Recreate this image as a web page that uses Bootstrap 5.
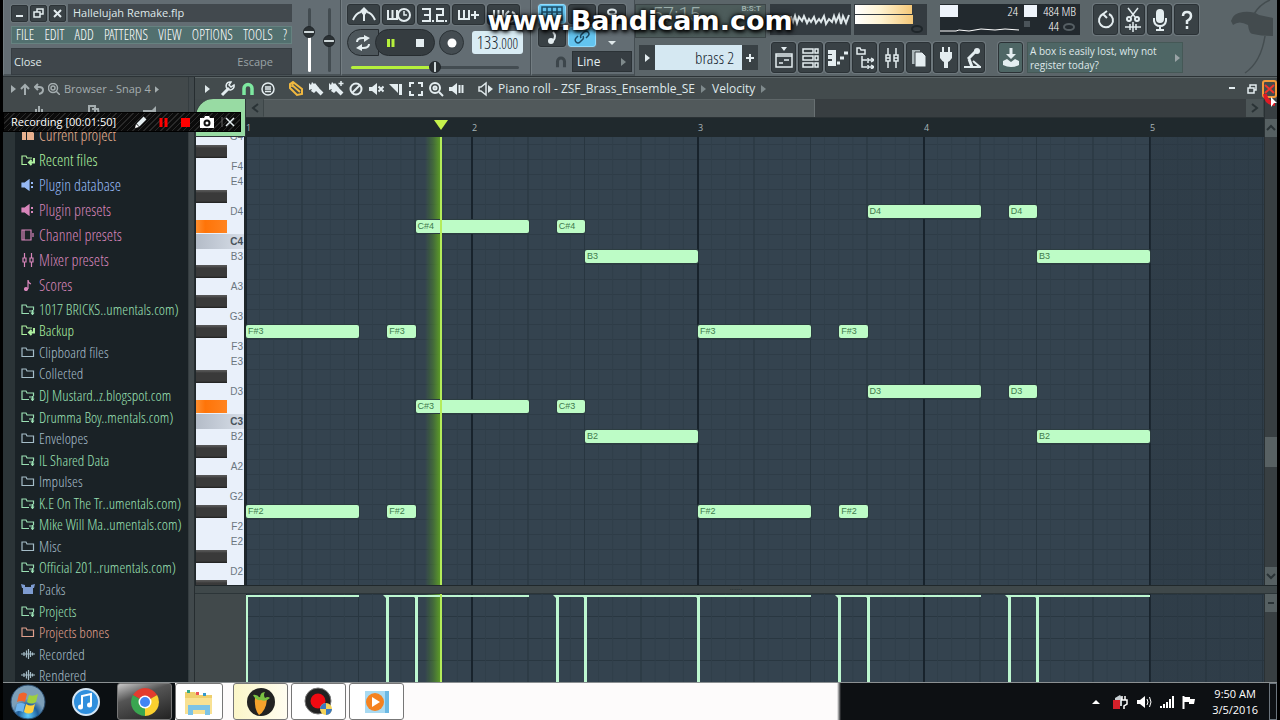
<!DOCTYPE html>
<html lang="en">
<head>
<meta charset="utf-8">
<meta name="viewport" content="width=device-width, initial-scale=1">
<title>Hallelujah Remake.flp</title>
<link href="https://cdn.jsdelivr.net/npm/bootstrap@5.3.0/dist/css/bootstrap.min.css" rel="stylesheet">
<style>
:root{--bar:226px;--row:15px;--ui:"Open Sans","Noto Sans",sans-serif;--narrow:"Open Sans Condensed Light","Open Sans Condensed","Liberation Sans Narrow","Open Sans",sans-serif}
body{background:#000;font-family:var(--ui);font-size:11px;line-height:16px;color:#dfe8ea}
svg{display:block;fill:none;stroke:currentColor;stroke-width:2;flex:none}
button,input,select{font:inherit;color:inherit}
.btn{--bs-btn-font-size:11px;--bs-btn-line-height:1;--bs-btn-color:#e4edf0;--bs-btn-padding-x:0;--bs-btn-padding-y:0;--bs-btn-border-radius:0}
.thin{stroke-width:1.5}
.shell{height:100vh;padding:0 3px}
/* top panel */
.topbar{height:77px;background:#5b6569;border-bottom:1px solid #2c3336;font-size:11px}
.pane{background:#636d73;border-right:1px solid #444d52;border-left:1px solid #737d82;border-bottom:2px solid #4a5357}
.keybtn{background:#394145;border:1px solid #2b3236;border-radius:3px!important;display:grid;place-items:center;box-shadow:0 0 0 1px #6d777c}
.keybtn:hover{background:#465056}
.keybtn.lit{background:#63c4ef;color:#1d4b66;border-color:#8fdcff}
.p-main{width:338px}
.titlebox{width:281px;margin-left:7px;gap:4px}
.winbtn{width:17px;height:17px;border-radius:2px!important}
.fname{height:18px;background:#42494e;line-height:17px;padding-left:5px}
.menubar{height:18px;background:#52706f;font-family:var(--narrow);font-weight:300;font-size:14px;line-height:16px;color:#fff;padding:0 4px;border:1px solid #668280}
.menubar a{color:inherit;text-decoration:none}
.hintbox{height:27px;background:#3f464b;border:1px solid #363d42;padding:0 2px;line-height:25px}
.dim{color:#9aa3a6}
.faders{margin-left:9px}
.vslot{width:16px;height:64px;display:grid;place-content:center}
.rng{appearance:none;background:transparent;height:14px;margin:0}
.rng::-webkit-slider-runnable-track{height:3px;border-radius:2px;background:linear-gradient(90deg,var(--on,#fff) var(--v),#434c51 var(--v))}
.rng::-webkit-slider-thumb{appearance:none;width:12px;height:12px;margin-top:-5px;border-radius:50%;background:linear-gradient(90deg,#2b3134 42%,#cfd8da 42% 58%,#2b3134 58%);border:1px solid #20262a}
.rng.up{width:64px;transform:rotate(-90deg)}
.rng.song{--on:#b6f03c;width:168px}
.p-trans{width:190px;padding-left:5px}
.p-trans .keybtn{width:33px;height:21px}
.pill{height:27px;background:#353c40;border:1px solid #262c30}
.pill.soft{width:32px;background:#4d565b;border-radius:14px 0 0 14px!important;display:grid;place-items:center}
.pill.duo{width:60px;border-radius:14px;margin-left:-4px}
.pill.duo .btn{width:29px;display:grid;place-items:center;height:25px}
.recbtn{width:25px;height:25px;border-radius:50%!important;background:#444c51;border:1px solid #2b3236;display:grid;place-items:center}
.tempo{width:51px;height:23px;background:#d9ecf4;color:#14242e;border-radius:3px;font-size:18px;font-family:var(--narrow);font-weight:300;line-height:22px}
.tempo small{font-size:14px}
.p-snap{width:104px;padding-left:6px}
.p-snap .keybtn{width:28px;height:20px}
.snapkeys{gap:3px 2px}
.linesel{width:60px;height:21px;background:#363d42;border:1px solid #2b3236;color:#e4edf0;font-size:12px;padding:0 4px;appearance:none}
.lit-gap{gap:2px}
.r-top{height:39px}
.lcd{width:131px;background:#4d5c5b;border:1px solid #3d4648;height:34px;color:#9db0ad;font-family:Roboto,sans-serif;font-weight:300;font-size:20px;line-height:20px}
.lcd small{font-size:8px;line-height:8px;font-weight:700}
.scope{width:81px;height:31px;background:#333b40}
.meter{width:73px;height:31px;background:#343b40;margin-left:3px}
.meter i{display:block;height:9px;margin:1px;background:linear-gradient(90deg,#fff,#fff3d0 45%,#f5c878)}
.cpu{width:140px;height:31px;background:#22292e;font-family:var(--narrow);font-weight:300;font-size:13px;line-height:15px;color:#fff;margin-left:13px}
.cpu-val{position:absolute;right:2px;top:0}
.after-cpu{margin-left:13px}
.tool{width:25px;height:31px}
.patname{width:87px;height:25px;background:#d5e8f2;color:#14242e;border:0;text-align:right;padding:0 8px;font-family:var(--narrow);font-weight:300;font-size:17px}
.patbtn{width:16px;height:25px;background:#394145;display:grid;place-items:center}
.tools{margin-left:13px}
.news{width:156px;height:31px;background:#4e6665;border:1px solid #455856;line-height:14px;padding:0 2px;font-size:10px}
.teal{background:#4e6665}
.mark-over{position:absolute;left:50%;top:6px;transform:translateX(-50%);font:bold 27px/30px "DejaVu Sans",sans-serif;color:#fff;text-shadow:0 0 3px #000,1px 2px 4px #000,0 0 6px #000;white-space:nowrap;z-index:5}
/* browser */
.side{width:185px;background:#2b3437}
.side-head{height:45px;background:#42494b;color:#a4adaf}
.side-nav{gap:4px}
.side-body{background:#1a2226;margin-left:12px}
.side-body a{display:flex;align-items:center;gap:4px;padding-left:6px;text-decoration:none;font-family:var(--narrow);font-weight:300;font-size:15px;line-height:20px;white-space:nowrap}
.side-body .grp1 a{font-size:16px}
.side-body svg{stroke-width:1.2}
.grp1{display:grid;grid-template-rows:repeat(7,1fr);height:176px}
.grp2{display:grid;grid-template-rows:repeat(18,1fr);height:388px}
.c-or{color:#e8b08e}.c-gr{color:#aef0a0}.c-bl{color:#96b9f5}.c-pk{color:#d886bb}.c-te{color:#9be0b4}.c-gy{color:#a5bdc8}.c-rd{color:#e0a08c}
.gutter{width:7px;background:#41494c;border-right:1px solid #262d30;border-left:1px solid #353d40}
.rec{position:absolute;left:3px;top:112px;width:238px;height:20px;background:repeating-linear-gradient(135deg,#0b0b0b 0 3px,#292929 3px 4px);border:1px solid #000;color:#fff;z-index:6;padding-left:7px}
.rec .btn{width:22px;display:grid;place-items:center}
/* piano roll */
.roll{background:#41494b;min-width:0}
.roll-head{height:22px;background:#434b4d;border-top:1px solid #5c6567;padding-left:10px}
.roll-head .btn{width:20px;display:grid;place-items:center;height:21px}
.speaker{margin:0 4px 0 12px}
.crumb{font-size:12px}
.sep{width:5px;height:8px;margin:0 6px;color:#7f8a8c}
.roll-head .shut{border:2px solid #f29a3a;height:18px;width:15px;border-radius:3px}
.corner{width:51px;background:#98dba3;border-top-left-radius:18px;border:1px solid #2d3639;border-width:0 1px 1px 1px}
.hscroll{height:19px;background:#383e41;border-bottom:1px solid #2a3134}
.hscroll .btn{width:18px;background:#4c5557;display:grid;place-items:center;border-right:1px solid #3d4648}
.hscroll path,.vbar path{stroke:#2a3336}
.hthumb{width:551px;background:#51595b;border-right:1px solid #687072;border-top:1px solid #5e6668}
.ruler{height:19px;background:#20292d;color:#a8b4b8;font-size:9px;line-height:18px}
.ruler span{position:absolute;top:1px}
.playtip{position:absolute;top:2px;margin-left:-7px;border:7px solid transparent;border-top:10px solid #c6f24c;border-bottom:0}
.keys{width:51px;background:#e9f0fa;border-left:1px solid #20272a;border-right:2px solid #20272a;overflow:hidden;color:#6b7680;font:10px/15px "Liberation Sans",Arial,sans-serif}
.keys ol{margin:-8px 0 0;padding:0;list-style:none}
.keys li{height:var(--row);padding-right:1px;text-align:right}
.keys li.blk{background:linear-gradient(180deg,#555 0 1px,#3a3a3a 3px 11px,#1e1e1e 13px) left 1px/31px 13px no-repeat}
.keys li.on{background:linear-gradient(90deg,#ff8f30,#ff7408 30%,#ff8420) left 1px/31px 13px no-repeat}
.keys li.oct{background:linear-gradient(90deg,#b4bcc8,#d6dde7);color:#48525a;font-weight:bold}
.grid-bg{--beat:calc(var(--bar) / 4);--six:calc(var(--bar) / 16);background-color:#34434f}
.notes{background-image:
 linear-gradient(90deg,transparent calc(var(--bar)*4),#26323c55 0),
 linear-gradient(90deg,#18232c 2px,transparent 2px),linear-gradient(90deg,#283640 1px,transparent 1px),linear-gradient(90deg,#2f3e49 1px,transparent 1px),linear-gradient(#2e3c47 1px,transparent 1px);
 background-size:100% 100%,var(--bar) 100%,var(--beat) 100%,var(--six) 100%,100% var(--row);background-position:0 0,-1px 0,-1px 0,-1px 0,0 7px;overflow:hidden}
.vel{height:88px;background-image:
 linear-gradient(90deg,transparent calc(var(--bar)*4),#26323c55 0),
 linear-gradient(90deg,#18232c 2px,transparent 2px),linear-gradient(90deg,#283640 1px,transparent 1px),linear-gradient(90deg,#2f3e49 1px,transparent 1px),linear-gradient(#293741 1px,transparent 1px);
 background-size:100% 100%,var(--bar) 100%,var(--beat) 100%,var(--six) 100%,100% 22px;background-position:0 0,-1px 0,-1px 0,-1px 0,0 0;overflow:hidden}
.vel-pad{width:51px}
.note{position:absolute;height:13px;background:#bdfcc6;color:#3f7a4c;border-radius:2px;font:9px/13px "Liberation Sans",Arial,sans-serif;padding-left:2px;box-shadow:0 0 0 1px #2c3c40}
.stem{position:absolute;top:1px;height:100%;border-top:2px solid #bdf7d0}
.stem::before{content:"";position:absolute;left:-1px;top:0;width:3px;height:100vh;background:#bdf7d0}
.stem::after{content:"";position:absolute;left:-4px;top:-2px;border:4px solid transparent;border-top-color:#bdf7d0;border-bottom:0}
.playglow{position:absolute;top:0;bottom:0;width:16px;margin-left:-16px;background:linear-gradient(90deg,transparent,#4f8a2a88 50%,#5f9f25)}
.playline{position:absolute;top:0;bottom:0;width:2px;margin-left:-1px;background:#b4ec5a;z-index:2}
.vbar{width:13px;background:#383f42;border-left:1px solid #2a3134}
.vbar .btn{height:18px;background:#566062;display:grid;place-items:center}
.vthumb{height:30px;background:#586163;margin:auto 0 100px}
.divider{height:9px;background:#3f484a;border-top:1px solid #20282b;border-bottom:1px solid #2c3538;color:#20282b;line-height:5px;font-size:8px}
/* taskbar */
.task{height:38px;background:linear-gradient(90deg,#0b0f12 0 172px,#fdfbfb 172px 834px,#0d1013 838px);border-top:1px solid #8b9092;color:#fff}
.task .btn{height:37px;display:grid;place-items:center}
.start{width:42px}
.itunes{width:34px;margin-left:20px}
.task .app{width:55px;border:1px solid #777;border-radius:3px;background:#fff;margin-left:3px}
.task .app.dark{background:linear-gradient(160deg,#c9c9c9,#555 35%,#222);margin-left:14px}
.task .app.slim{width:48px}
.task .app.gold{background:linear-gradient(90deg,#fbf6c8,#fffdf0);margin-left:10px}
.clock{font-size:11px;line-height:16px;text-align:center}
.tray{padding-right:11px}
.desk{width:8px}
.cursor{top:92px;margin-right:3px;z-index:6}
.logo{margin-right:3px}
</style>
</head>
<body>
<svg width="0" height="0" class="position-absolute" aria-hidden="true"><defs>
<symbol id="fold" viewBox="0 0 14 12"><path d="M1 10.500V2h4l1 2h6.500v6.500z"/></symbol>
<symbol id="foldp" viewBox="0 0 14 12"><path d="M8 10.500H1V2h4l1 2h6.500v3M8 8h5M11.500 7v3.500M10 9.500l1.500 2L13 9.500"/></symbol>
<symbol id="foldr" viewBox="0 0 14 12"><path d="M6 10.500H1V2h4l1 2h5"/><path d="M13 4v4.500H8.500M10.500 6L8 8.500l2.500 2.500" stroke-width="2"/></symbol>
<symbol id="plug" viewBox="0 0 14 12"><path d="M1 4h3l4-3v10L4 8H1z" fill="currentColor"/><path d="M11 3v2M11 7v2" stroke-width="2"/></symbol>
<symbol id="wave" viewBox="0 0 14 12"><path d="M0 6h14M3 4v4M5.500 2.500v7M7.500 1v10M9.500 3v6M11.500 4.500v3"/></symbol>
<symbol id="spk" viewBox="0 0 16 16"><path d="M1 6h3l5-4v12l-5-4H1z" fill="currentColor" stroke="none"/></symbol>
<symbol id="tri" viewBox="0 0 5 8"><path d="M0 0l5 4-5 4z" fill="currentColor" stroke="none"/></symbol>
</defs></svg>

<div class="shell d-flex flex-column position-relative overflow-hidden">
<header class="topbar d-flex flex-shrink-0">
  <section class="pane p-main d-flex flex-shrink-0">
    <div class="titlebox pt-1 d-flex flex-column">
      <div class="d-flex lit-gap align-items-center">
        <button class="btn keybtn winbtn" aria-label="Minimize"><svg width="11" height="11"><path d="M2 8h7"/></svg></button>
        <button class="btn keybtn winbtn" aria-label="Restore"><svg class="thin" width="11" height="11"><path d="M1 4h6v5H1zM4 4V1h6v5H7"/></svg></button>
        <button class="btn keybtn winbtn" aria-label="Close"><svg width="11" height="11"><path d="M2 2l7 7M9 2l-7 7"/></svg></button>
        <div class="fname flex-grow-1">Hallelujah Remake.flp</div>
      </div>
      <nav class="menubar d-flex justify-content-between"><a href="#">FILE</a><a href="#">EDIT</a><a href="#">ADD</a><a href="#">PATTERNS</a><a href="#">VIEW</a><a href="#">OPTIONS</a><a href="#">TOOLS</a><a href="#">?</a></nav>
      <div class="hintbox d-flex"><span>Close</span><span class="ms-auto me-3 dim">Escape</span></div>
    </div>
    <div class="d-flex pt-2 faders gap-1">
      <div class="vslot"><input type="range" class="rng up" value="66" aria-label="Main volume" style="--v:66%"></div>
      <div class="vslot"><input type="range" class="rng up" value="48" aria-label="Main pitch" style="--v:0%"></div>
    </div>
  </section>

  <section class="pane p-trans flex-shrink-0 pt-1">
    <div class="d-flex lit-gap">
      <button class="btn keybtn" aria-label="Metronome"><svg width="26" height="16"><path d="M2 13Q5 6 10 5M16 5q5 1 8 8M13 5v9"/><path d="M13 0l4 4-4 5-4-5z" fill="currentColor" stroke="none"/></svg></button>
      <button class="btn keybtn" aria-label="Wait for input"><svg width="26" height="16"><path d="M2 3v9h9V3M6.500 3v9"/><circle cx="18" cy="8" r="6"/><path d="M18 4v4h3" stroke-width="1.500"/></svg></button>
      <button class="btn keybtn" aria-label="Countdown"><svg width="26" height="16"><path d="M1 2h8v12H1M3 8h6M12 13v2M15 2h7v6h-6v6h7M25 13v2"/></svg></button>
      <button class="btn keybtn" aria-label="Overdub"><svg width="24" height="16"><path d="M2 3v9h10V3M7 3v9M14 8h8M18 4v8"/></svg></button>
      <button class="btn keybtn" aria-label="Loop record"><svg width="24" height="16"><path d="M2 3v9h9V3M6.500 3v9M20 5a5 5 0 1 1-5 1l2-2"/></svg></button>
    </div>
    <div class="d-flex align-items-center mt-1">
      <button class="btn pill soft" aria-label="Song mode"><svg width="16" height="16"><path d="M2 7q0-4 6-4h3M14 9q0 4-6 4H5"/><path d="M9 0l6 3-6 4zM7 9l-6 4 6 3z" fill="currentColor" stroke="none"/></svg></button>
      <div class="pill duo d-flex"><button class="btn" aria-label="Pause"><svg width="10" height="10"><path d="M2.500 1v8M7 1v8" stroke="#b6f03c" stroke-width="3"/></svg></button><button class="btn" aria-label="Stop"><svg width="8" height="8"><path d="M0 0h8v8H0z" fill="currentColor" stroke="none"/></svg></button></div>
      <button class="btn recbtn ms-1" aria-label="Record"><svg width="10" height="10"><circle cx="5" cy="5" r="4.500" fill="#fff" stroke="none"/></svg></button>
      <div class="tempo ms-2 text-center">133<small>.000</small></div>
    </div>
    <input type="range" class="rng song d-block ms-1 mt-1" value="50" aria-label="Song position" style="--v:50%">
  </section>

  <section class="pane p-snap flex-shrink-0 pt-1">
    <div class="d-flex flex-wrap snapkeys">
      <button class="btn keybtn lit" aria-label="Typing keyboard"><svg class="thin" width="22" height="16"><path d="M1 1h20v13H1zM6 1v13M11 1v13M16 1v13M1 6h20"/></svg></button>
      <button class="btn keybtn" aria-label="Step edit"></button>
      <button class="btn keybtn" aria-label="Knob"><svg width="14" height="14"><ellipse cx="7" cy="5" rx="4" ry="2.500"/></svg></button>
      <button class="btn keybtn" aria-label="Note"><svg width="14" height="14"><path d="M8 2q4 4 0 9"/><circle cx="6" cy="11" r="2" fill="currentColor"/></svg></button>
      <button class="btn keybtn lit" aria-label="Link"><svg width="16" height="16"><path d="M7 9a3 3 0 0 1 0-3l3-3a2.500 2.500 0 0 1 4 4l-2 2M9 7a3 3 0 0 1 0 3l-3 3a2.500 2.500 0 0 1-4-4l2-2" stroke="#1d4b66" stroke-width="1.500"/></svg></button>
      <svg width="28" height="20"><path d="M10 14h8l-4 4z" fill="currentColor" stroke="none"/></svg>
    </div>
    <div class="d-flex align-items-center mt-1"><svg class="ms-3 me-1" width="14" height="14" viewBox="0 0 16 16"><path d="M4 14V7.500a4 4 0 0 1 8 0V14" stroke="#3d464b" stroke-width="3.500"/></svg>
      <div class="position-relative"><select class="linesel" aria-label="Snap"><option>Line</option></select><svg class="sep position-absolute end-0 top-50 translate-middle-y"><use href="#tri"/></svg></div></div>
  </section>

  <div class="flex-grow-1 d-flex flex-column">
    <div class="r-top d-flex pt-1">
      <div class="lcd ps-3 pe-1 d-flex justify-content-between">57:15<small>B:S:T</small></div>
      <svg class="scope ms-1" width="81" height="31" viewBox="0 0 81 31"><path d="M2 13l4 1 5-2 5 3 5-2 2 5 2-6 2 7 2-6 3 4 2-5 3 7 2-4 2 3 3-5 2 6 3-4 2 3 3-6 2 8 3-5 3 3 2-6 2 6 3-7 2 9 2-8 3 7 3-8" stroke-width="2"/></svg>
      <div class="meter overflow-hidden"><i style="width:57px"></i><i style="width:58px"></i><svg class="ms-auto me-1" width="12" height="8"><ellipse cx="6" cy="4" rx="5" ry="3" stroke="#1f262a"/></svg></div>
      <div class="cpu d-flex">
        <div class="position-relative"><svg width="80" height="31"><path d="M0 1h18v12H0z" fill="#eef4fb" stroke="none"/><path d="M0 27h16l3-1 10 1 12-2 14 1 10-1 14 1" stroke-width="1"/></svg><span class="cpu-val">24</span></div>
        <svg class="ms-1" width="13" height="31"><path d="M0 1h13v12H0z" fill="#eef4fb" stroke="none"/><path d="M0 17h6v6H0z" fill="#4b545a" stroke="none"/></svg>
        <div class="flex-grow-1 text-end pe-1 text-nowrap"><div>484 MB</div><div class="d-flex align-items-center justify-content-end gap-1">44<svg width="13" height="8"><ellipse cx="6" cy="4" rx="5" ry="3" stroke="#555e63"/></svg></div></div>
      </div>
      <div class="d-flex after-cpu lit-gap">
        <button class="btn keybtn tool" aria-label="Undo"><svg width="18" height="20"><path d="M6 4a7 7 0 1 0 6 0M10 1L6 4l4 4"/></svg></button>
        <button class="btn keybtn tool" aria-label="Cut"><svg width="18" height="26"><path d="M4 1l7 9M14 1L7 10M1 20h16M6 17v6M9 15v10M12 17v6" stroke-width="1.500"/><circle cx="5" cy="12" r="2"/><circle cx="13" cy="12" r="2"/></svg></button>
        <button class="btn keybtn tool" aria-label="Record audio"><svg width="16" height="22"><rect x="5" y="1" width="6" height="12" rx="3" fill="currentColor"/><path d="M2 9v3q1 5 6 5t6-5V9M8 17v4M4 21h8"/></svg></button>
        <button class="btn keybtn tool" aria-label="Help"><svg width="14" height="20"><path d="M3 6q0-4 4-4t4 4q0 3-4 5v3M7 16v3" stroke-width="2.500"/></svg></button>
      </div>
    </div>
    <div class="d-flex align-items-center flex-grow-1">
      <button class="btn patbtn ms-1" aria-label="Pattern menu"><svg width="5" height="8"><use href="#tri"/></svg></button>
      <input class="patname" value="brass 2" aria-label="Pattern name">
      <button class="btn patbtn" aria-label="Add pattern"><svg width="8" height="8"><path d="M4 0v8M0 4h8"/></svg></button>
      <div class="d-flex tools lit-gap">
        <button class="btn keybtn tool" aria-label="Playlist"><svg class="thin" width="18" height="22"><path d="M6 0h6L9 4z" fill="currentColor" stroke="none"/><path d="M1 7h16v13H1zM1 9h16M4 16h4M9 13h5"/></svg></button>
        <button class="btn keybtn tool" aria-label="Channel rack"><svg class="thin" width="18" height="20"><path d="M1 1h10v4H1zM13 1h3v4h-3zM1 8h10v4H1zM13 8h3v4h-3zM1 15h10v4H1zM13 15h3v4h-3z"/></svg></button>
        <button class="btn keybtn tool" aria-label="Piano roll"><svg width="20" height="18"><path d="M0 1h8v16H0zM0 5h4v1H0zM0 10h4v2H0z" fill="currentColor" fill-rule="evenodd" stroke="none"/><path d="M9 14h3M12 9h4M16 4h4" stroke-width="3"/></svg></button>
        <button class="btn keybtn tool" aria-label="Browser"><svg class="thin" width="18" height="22"><path d="M1 7V1h3l1 2h4v4zM6 9v11h5M6 13h5M12 11v5M12 18v4M12 13h5M12 20h5M15 11l3 2-3 2M15 18l3 2-3 2"/></svg></button>
        <button class="btn keybtn tool" aria-label="Mixer"><svg class="thin" width="16" height="20"><path d="M4 0v7M4 13v7M12 0v7M12 13v7M2 7h4v6H2zM10 7h4v6h-4zM2 10h4M10 10h4"/></svg></button>
        <button class="btn keybtn tool" aria-label="Project files"><svg width="16" height="18"><path d="M1 1h8v14H1z" fill="#aab5b8" stroke="none"/><path d="M4 3h7l4 4v11H4z" fill="currentColor" stroke="#394145" stroke-width="1"/></svg></button>
        <button class="btn keybtn tool" aria-label="Plugin picker"><svg width="14" height="22"><path d="M4 0v6M10 0v6"/><path d="M1 5h12v6q-2 3-4 4v6H5v-6q-2-1-4-4z" fill="currentColor" stroke="none"/></svg></button>
        <button class="btn keybtn tool" aria-label="Tools"><svg width="18" height="22"><path d="M4 12L12 4M5 12l3 8" stroke-width="3"/><circle cx="13" cy="4" r="3" fill="currentColor" stroke="none"/><path d="M0 20h17M9 14l7 6"/></svg></button>
      </div>
      <button class="btn keybtn tool teal after-cpu" aria-label="Download"><svg width="18" height="20"><path d="M9 0v8" stroke-width="3"/><path d="M4 6h10l-5 5zM1 13l4-2 4 3 4-3 4 2v4q-8 4-16 0z" fill="currentColor" stroke="none"/></svg></button>
      <div class="news ms-1 d-flex align-items-center"><span class="flex-grow-1">A box is easily lost, why not register today?</span><svg class="dim" width="5" height="8"><use href="#tri"/></svg></div>
    </div>
  </div>
</header>
<svg class="position-absolute end-0 top-0 logo" width="60" height="76" viewBox="0 0 60 76"><path d="M14 21q2-8 12-9 10-1 16 3l14 3v18q-12 0-20-2-4 0-5-9-9-5-15 0z" fill="#434b4e" stroke="none"/><path d="M37 14q6-10 16-14M48 36q-4 26-20 37" stroke="#444d50" stroke-width="1.500"/></svg>
<div class="mark-over">www.Bandicam.com</div>

<div class="d-flex flex-grow-1 overflow-hidden">
  <aside class="side flex-shrink-0 overflow-hidden">
    <div class="side-head px-2 pt-1">
      <div class="d-flex align-items-center side-nav">
        <svg width="5" height="8"><use href="#tri"/></svg>
        <svg width="10" height="12"><path d="M5 12V2M1 6l4-4 4 4"/></svg>
        <svg width="10" height="12"><path d="M4 1L1 4l3 3M1 4h4q4 0 4 3t-4 4"/></svg>
        <svg class="thin" width="12" height="12"><circle cx="5" cy="5" r="4.500"/><circle cx="5" cy="5" r="2"/><path d="M8 8l4 4"/></svg>
        <span class="text-nowrap">Browser - Snap 4</span><svg width="4" height="7"><use href="#tri"/></svg>
      </div>
      <div class="d-flex justify-content-around pt-2"><svg width="14" height="12"><path d="M1 8h12M4 4v8M7 1v11M10 4v8"/></svg><svg width="12" height="12"><path d="M1 12V1h6v11M4 4h6l1 8"/></svg><svg width="16" height="12"><path d="M0 5h9l4-4v10H0z" fill="currentColor" stroke="none"/></svg></div>
    </div>
    <nav class="side-body" aria-label="Browser">
      <div class="grp1">
        <a href="#" class="c-or"><svg width="14" height="12"><path d="M1 3h4v8H1zM6 1h4l3 3v7H6z" fill="currentColor" stroke="none"/></svg>Current project</a>
        <a href="#" class="c-gr"><svg width="14" height="12"><use href="#foldr"/></svg>Recent files</a>
        <a href="#" class="c-bl"><svg width="14" height="12"><use href="#plug"/></svg>Plugin database</a>
        <a href="#" class="c-pk"><svg width="14" height="12"><use href="#plug"/></svg>Plugin presets</a>
        <a href="#" class="c-pk"><svg width="14" height="12"><path d="M1 1h9v10H1zM3 1v10M12 4v4"/></svg>Channel presets</a>
        <a href="#" class="c-pk"><svg width="14" height="14"><path d="M3.500 0v5M3.500 9v5M10.500 0v5M10.500 9v5M2 5h3v4H2zM9 5h3v4H9z"/></svg>Mixer presets</a>
        <a href="#" class="c-pk"><svg width="14" height="12"><path d="M7 10V1q0 3 3 4"/><circle cx="5" cy="10" r="1.500" fill="currentColor"/></svg>Scores</a>
      </div>
      <div class="grp2">
        <a href="#" class="c-te"><svg width="14" height="12"><use href="#foldp"/></svg>1017 BRICKS..umentals.com)</a>
        <a href="#" class="c-gr"><svg width="14" height="12"><use href="#foldr"/></svg>Backup</a>
        <a href="#" class="c-gy"><svg width="14" height="12"><use href="#fold"/></svg>Clipboard files</a>
        <a href="#" class="c-gy"><svg width="14" height="12"><use href="#fold"/></svg>Collected</a>
        <a href="#" class="c-te"><svg width="14" height="12"><use href="#foldp"/></svg>DJ Mustard..z.blogspot.com</a>
        <a href="#" class="c-te"><svg width="14" height="12"><use href="#foldp"/></svg>Drumma Boy..mentals.com)</a>
        <a href="#" class="c-gy"><svg width="14" height="12"><use href="#fold"/></svg>Envelopes</a>
        <a href="#" class="c-te"><svg width="14" height="12"><use href="#foldp"/></svg>IL Shared Data</a>
        <a href="#" class="c-gy"><svg width="14" height="12"><use href="#fold"/></svg>Impulses</a>
        <a href="#" class="c-te"><svg width="14" height="12"><use href="#foldp"/></svg>K.E On The Tr..umentals.com)</a>
        <a href="#" class="c-te"><svg width="14" height="12"><use href="#foldp"/></svg>Mike Will Ma..umentals.com)</a>
        <a href="#" class="c-gy"><svg width="14" height="12"><use href="#fold"/></svg>Misc</a>
        <a href="#" class="c-te"><svg width="14" height="12"><use href="#foldp"/></svg>Official 201..rumentals.com)</a>
        <a href="#" class="c-gy"><svg width="14" height="12"><path d="M0 1l4 1v2h6V2l4-1-1 4-1 0v6H2V5H1z" fill="#7d9bd0" stroke="none"/></svg>Packs</a>
        <a href="#" class="c-te"><svg width="14" height="12"><use href="#foldp"/></svg>Projects</a>
        <a href="#" class="c-rd"><svg width="14" height="12"><use href="#fold"/></svg>Projects bones</a>
        <a href="#" class="c-gy"><svg width="14" height="12"><use href="#wave"/></svg>Recorded</a>
        <a href="#" class="c-gy"><svg width="14" height="12"><use href="#wave"/></svg>Rendered</a>
      </div>
    </nav>
  </aside>
  <div class="gutter flex-shrink-0"></div>

  <main class="roll flex-grow-1 d-flex flex-column">
    <div class="roll-head d-flex align-items-center flex-shrink-0">
      <svg width="5" height="8" class="me-1"><use href="#tri"/></svg>
      <button class="btn ms-1" aria-label="Tools"><svg width="16" height="16"><path d="M2 14l7-7" stroke-width="3"/><path d="M14 4a4 4 0 1 1-3-3L9 4l2 2z" stroke-width="1.500"/></svg></button>
      <button class="btn" aria-label="Snap"><svg width="16" height="16"><path d="M4 14V7.500a4 4 0 0 1 8 0V14" stroke="#7ee8a0" stroke-width="3.500"/></svg></button>
      <button class="btn" aria-label="Menu"><svg class="thin" width="16" height="16"><circle cx="8" cy="8" r="6"/><path d="M5 6h6M5 8h6M5 10.500h6"/></svg></button>
      <button class="btn ms-2" aria-label="Draw"><svg width="16" height="16"><path d="M2 3l3-2 9 7v5l-5 1-7-7zM5 1L4 6M4 4l8 7" stroke="#f0b840"/></svg></button>
      <button class="btn" aria-label="Paint"><svg width="16" height="16"><path d="M1 2l2 2 1-3 2 2 1-1 4 5-5 5-3-2 1-2-3 1z" fill="currentColor" stroke="none"/><path d="M9 8l5 5" stroke-width="4"/></svg></button>
      <button class="btn" aria-label="Paint drum"><svg width="16" height="16"><path d="M1 2l2 2 1-3 2 2 1-1 4 5-5 5-3-2 1-2-3 1z" fill="currentColor" stroke="none"/><path d="M9 8l5 5" stroke-width="4"/><path d="M13 0v5M10.500 2.500h5" stroke-width="1.500"/></svg></button>
      <button class="btn" aria-label="Delete"><svg width="16" height="16"><circle cx="8" cy="8" r="5.500"/><path d="M4 12l8-8"/></svg></button>
      <button class="btn" aria-label="Mute"><svg width="16" height="16"><use href="#spk"/><path d="M10.500 5.500l5 5M15.500 5.500l-5 5"/></svg></button>
      <button class="btn" aria-label="Slice"><svg width="16" height="16"><path d="M1 3h9v9z" fill="currentColor" stroke="none"/><path d="M12.500 3v11" stroke-width="3"/></svg></button>
      <button class="btn" aria-label="Select"><svg width="16" height="16"><path d="M2 6V2h4M10 2h4v4M14 10v4h-4M6 14H2v-4"/></svg></button>
      <button class="btn" aria-label="Zoom"><svg width="16" height="16"><circle cx="7" cy="7" r="5"/><circle cx="7" cy="7" r="1.500"/><path d="M11 11l4 4"/></svg></button>
      <button class="btn" aria-label="Play"><svg width="16" height="16"><use href="#spk"/><path d="M11.500 4v8M14.500 4v8"/></svg></button>
      <svg width="16" height="16" class="speaker"><path d="M1 6h2l5-4v12l-5-4H1z" stroke-width="1.500"/><path d="M10 4l5 4-5 4z" fill="currentColor" stroke="none"/></svg>
      <span class="crumb text-nowrap">Piano roll - ZSF_Brass_Ensemble_SE</span><svg class="sep"><use href="#tri"/></svg><span class="crumb">Velocity</span><svg class="sep"><use href="#tri"/></svg>
      <div class="ms-auto d-flex align-items-center">
        <button class="btn" aria-label="Minimize"><svg width="10" height="10"><path d="M2 4h6"/></svg></button>
        <button class="btn" aria-label="Restore"><svg class="thin" width="10" height="10"><path d="M1 4h6v5H1zM3 4V1h6v5H7"/></svg></button>
        <button class="btn shut" aria-label="Close"><svg width="11" height="10"><path d="M1 1l9 8M10 1L1 9" stroke="#f2342c"/></svg></button>
      </div>
    </div>
    <div class="d-flex flex-shrink-0">
      <div class="corner flex-shrink-0"></div>
      <div class="flex-grow-1">
        <div class="hscroll d-flex"><button class="btn" aria-label="Scroll left"><svg width="8" height="10"><path d="M7 1L2 5l5 4"/></svg></button><div class="hthumb flex-shrink-1"></div><button class="btn ms-auto" aria-label="Scroll right"><svg width="8" height="10"><path d="M1 1l5 4-5 4"/></svg></button></div>
        <div class="ruler position-relative" id="ruler"></div>
      </div>
      <div class="vbar d-flex flex-column"><button class="btn mt-auto" aria-label="Scroll up"><svg width="10" height="8"><path d="M1 6l4-4 4 4"/></svg></button></div>
    </div>
    <div class="d-flex flex-grow-1" style="min-height:0">
      <div class="keys flex-shrink-0"><ol id="keys"></ol></div>
      <div class="grid-bg notes flex-grow-1 position-relative" id="notes"></div>
      <div class="vbar d-flex flex-column"><div class="vthumb"></div><button class="btn" aria-label="Scroll down"><svg width="10" height="8"><path d="M1 2l4 4 4-4"/></svg></button></div>
    </div>
    <div class="divider text-center flex-shrink-0">······</div>
    <div class="d-flex flex-shrink-0">
      <div class="flex-shrink-0 vel-pad"></div>
      <div class="grid-bg vel flex-grow-1 position-relative" id="vel"></div>
      <div class="vbar"><button class="btn w-100" aria-label="Control menu"><svg width="6" height="4"><path d="M0 2h6"/></svg></button></div>
    </div>
  </main>
</div>

<footer class="task d-flex align-items-center flex-shrink-0">
  <button class="btn ms-1 start" aria-label="Start"><svg width="38" height="36" viewBox="0 0 38 36"><defs><radialGradient id="orb" cx=".5" cy=".9"><stop offset="0" stop-color="#5fd0ff"/><stop offset=".6" stop-color="#1f5f9c"/><stop offset="1" stop-color="#7d9fb8"/></radialGradient></defs><circle cx="19" cy="18" r="17" fill="url(#orb)" stroke="#27496b" stroke-width="1"/><g stroke="none"><path d="M10 10q5-3 8 0l-2 8q-4-2-8 0z" fill="#f0642c"/><path d="M20 11q4 2 9-1l-2 8q-5 3-9 0z" fill="#9fd040"/><path d="M8 20q4-2 8 0l-2 8q-4-2-8 0z" fill="#6fb4ee"/><path d="M17 20q5 3 9 0l-2 8q-4 3-9 0z" fill="#ffd040"/></g></svg></button>
  <button class="btn itunes" aria-label="iTunes"><svg width="30" height="30"><circle cx="15" cy="15" r="13" fill="#2f8fdd" stroke="#d5e6f4" stroke-width="2"/><path d="M11 20V9l9-2v11" stroke="#fff" stroke-width="2"/><g stroke="none" fill="#fff"><circle cx="9.500" cy="20" r="2.500"/><circle cx="18.500" cy="18" r="2.500"/></g></svg></button>
  <button class="btn app dark" aria-label="Chrome"><svg width="28" height="28" viewBox="0 0 28 28"><g stroke="none"><path d="M14 14L1.900 7A14 14 0 0 1 26.100 7z" fill="#e33b2e"/><path d="M14 14L26.100 7A14 14 0 0 1 14 28z" fill="#fbd02f"/><path d="M14 14v14A14 14 0 0 1 1.900 7z" fill="#3aa650"/><circle cx="14" cy="14" r="6.500" fill="#fff"/><circle cx="14" cy="14" r="5" fill="#4285f4"/></g></svg></button>
  <button class="btn app slim" aria-label="Explorer"><svg width="32" height="28"><g stroke="none"><path d="M2 4h10l2 3h15v18H2z" fill="#eecf6c"/><path d="M2 10h27v16H2z" fill="#f8e193"/><path d="M5 27V17h22v10h-5v-5H10v5z" fill="#7cc3e6"/><path d="M4 2h3v3H4z" fill="#3a8"/><path d="M13 4h3v3h-3z" fill="#e55"/><path d="M20 5h3v3h-3z" fill="#39c"/></g></svg></button>
  <button class="btn app gold" aria-label="FL Studio"><svg width="30" height="30"><g stroke="none"><circle cx="15" cy="15" r="14" fill="#222"/><path d="M9 11q6-2 12 1-1 12-8 16-5-6-4-17z" fill="#f6a22c"/><path d="M7 8q4-1 7 3 0-6 5-6-2 3 0 6 3-2 5 0-4 4-9 2-5 1-8-5z" fill="#7ac142"/></g></svg></button>
  <button class="btn app" aria-label="Bandicam"><svg width="30" height="30"><circle cx="14" cy="14" r="13" fill="#222" stroke="#777" stroke-width="1"/><g stroke="none"><circle cx="14" cy="14" r="7.500" fill="#f00a12"/><circle cx="22" cy="22" r="6" fill="#f4d35a"/><path d="M22 16v6h-6a6 6 0 0 1 6-6zM22 28v-6h6a6 6 0 0 1-6 6z" fill="#3a78c0"/></g></svg></button>
  <button class="btn app" aria-label="Media Player"><svg width="28" height="26"><g stroke="none"><path d="M6 2h20v22H6z" fill="#6bb9e4"/><path d="M2 2h20v22H2z" fill="#a8daf2"/><circle cx="12" cy="13" r="9" fill="#f58220"/><path d="M9 8l8 5-8 5z" fill="#fff"/></g></svg></button>
  <div class="ms-auto d-flex align-items-center gap-2 tray">
    <svg width="8" height="6"><path d="M0 5l4-4 4 4z" fill="#fff" stroke="none"/></svg>
    <svg width="16" height="16" class="ms-1"><path d="M3 4l5-3 2 3v8H3z" fill="#c8d0d4" stroke="none"/><path d="M1 6h7v9H1z" fill="#d3202a" stroke="none"/><path d="M10 2v4M13 2v4M9 6h6v4l-3 2v3" stroke-width="1.500"/></svg>
    <svg width="16" height="16"><path d="M1 6h3l5-4v12l-5-4H1z" fill="#fff" stroke="none"/><path d="M11 5q2 3 0 6M13.500 3q3 5 0 10" stroke-width="1"/></svg>
    <svg width="14" height="14"><path d="M1 11v2M4 9v4M7 7v6M10 4v9M13 1v12"/></svg>
    <svg width="14" height="14"><path d="M1.500 1v13" /><path d="M2 2h6v2h5l-1 5H7V7H2z" fill="#fff" stroke="none"/></svg>
    <div class="clock ms-2"><div>9:50 AM</div><div>3/5/2016</div></div>
  </div>
  <button class="btn desk border-start border-secondary" aria-label="Show desktop"></button>
</footer>

<div class="rec d-flex align-items-center"><span class="me-auto">Recording [00:01:50]</span>
  <button class="btn" aria-label="Draw"><svg width="12" height="12"><path d="M3 9l7-7" stroke-width="4"/><path d="M0 12l1-4 3 3z" fill="#fff" stroke="none"/></svg></button>
  <button class="btn" aria-label="Pause"><svg width="9" height="9"><path d="M2 0v9M7 0v9" stroke="#f00" stroke-width="3"/></svg></button>
  <button class="btn" aria-label="Stop"><svg width="9" height="9"><path d="M0 0h9v9H0z" fill="#f00" stroke="none"/></svg></button>
  <button class="btn" aria-label="Screenshot"><svg width="14" height="12"><path d="M0 2h4l1-2h4l1 2h4v10H0z" fill="#fff" stroke="none"/><circle cx="7" cy="7" r="2.500" stroke="#111"/></svg></button>
  <button class="btn" aria-label="Close"><svg class="thin" width="16" height="10"><path d="M1 0v10" stroke="#666" stroke-width="1"/><path d="M5 1l8 8M13 1L5 9"/></svg></button>
</div>
<svg class="position-absolute end-0 cursor" width="14" height="20"><path d="M2 2q1 9 10 10" stroke="#e01a24" stroke-width="4"/><path d="M8 5l6 6h-3l-3 4z" fill="#fff" stroke="none"/></svg>
</div>

<script src="https://cdn.jsdelivr.net/npm/bootstrap@5.3.0/dist/js/bootstrap.bundle.min.js"></script>
<script>
const names=['C','C#','D','D#','E','F','F#','G','G#','A','A#','B'];
const TOP=4*12+7;                       // highest visible key: G4
const held=['C#4','C#3'];
const label=n=>names[n%12]+Math.floor(n/12);
const keys=document.getElementById('keys');
for(let n=TOP;n>TOP-31;n--){
  const li=document.createElement('li'),t=label(n);
  if(held.includes(t)) li.className='on';
  else if(t.includes('#')) li.className='blk';
  else{ li.textContent=t; if(t[0]==='C') li.className='oct'; }
  keys.append(li);
}
// start and length in sixteenths
const phrase=[[0,8,['F#3','F#2']],[10,2,['F#3','F#2']],[12,8,['C#4','C#3']],[22,2,['C#4','C#3']],[24,8,['B3','B2']],
 [32,8,['F#3','F#2']],[42,2,['F#3','F#2']],[44,8,['D4','D3']],[54,2,['D4','D3']],[56,8,['B3','B2']]];
const at=s=>`calc(var(--bar) * ${s} / 16)`;
const notes=document.getElementById('notes'),vel=document.getElementById('vel'),ruler=document.getElementById('ruler');
const add=(p,tag,c,css,t)=>{const e=document.createElement(tag);if(c)e.className=c;Object.assign(e.style,css);if(t)e.textContent=t;p.append(e)};
const pos=13.8;
for(const p of [notes,vel]) add(p,'div','playglow',{left:at(pos)});
for(const [s,l,ps] of phrase){
  for(const p of ps){
    const n=names.indexOf(p.slice(0,-1))+12*+p.slice(-1);
    add(notes,'div','note',{left:at(s),width:at(l),top:(TOP-n)*15-7+'px'},p);
  }
  add(vel,'div','stem',{left:at(s),width:at(l)});
}
for(let b=1;b<=5;b++) add(ruler,'span','',{left:at((b-1)*16)},String(b));
add(ruler,'div','playtip',{left:at(pos)});
for(const p of [notes,vel]) add(p,'div','playline',{left:at(pos)});
</script>
</body>
</html>
